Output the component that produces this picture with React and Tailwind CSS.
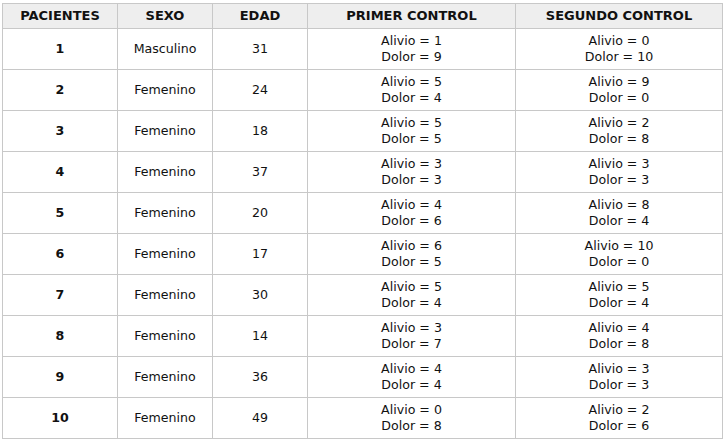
import React from "react";

const rows = [
  ["1", "Masculino", "31", [1, 9], [0, 10]],
  ["2", "Femenino", "24", [5, 4], [9, 0]],
  ["3", "Femenino", "18", [5, 5], [2, 8]],
  ["4", "Femenino", "37", [3, 3], [3, 3]],
  ["5", "Femenino", "20", [4, 6], [8, 4]],
  ["6", "Femenino", "17", [6, 5], [10, 0]],
  ["7", "Femenino", "30", [5, 4], [5, 4]],
  ["8", "Femenino", "14", [3, 7], [4, 8]],
  ["9", "Femenino", "36", [4, 4], [3, 3]],
  ["10", "Femenino", "49", [0, 8], [2, 6]],
];

const th = "border border-[#c8c8c8] bg-[#eeeeee] font-bold text-[13px] h-[25px] p-0 text-center align-middle";
const td = "border border-[#c8c8c8] text-[12.6px] h-[41px] p-0 text-center align-middle leading-[16px]";

export default function App() {
  return (
    <div className="w-[725px] h-[442px] bg-white pl-[2px] pt-[3px] text-[#111]" style={{ fontFamily: '"DejaVu Sans", Verdana, sans-serif' }}>
      <table className="border-collapse table-fixed w-[720px]">
        <colgroup>
          <col className="w-[115px]" />
          <col className="w-[95px]" />
          <col className="w-[95px]" />
          <col className="w-[208px]" />
          <col className="w-[207px]" />
        </colgroup>
        <thead>
          <tr>
            <th className={th}>PACIENTES</th>
            <th className={th}>SEXO</th>
            <th className={th}>EDAD</th>
            <th className={th}>PRIMER CONTROL</th>
            <th className={th}>SEGUNDO CONTROL</th>
          </tr>
        </thead>
        <tbody>
          {rows.map((r) => (
            <tr key={r[0]}>
              <td className={td + " font-bold"}>{r[0]}</td>
              <td className={td}>{r[1]}</td>
              <td className={td}>{r[2]}</td>
              <td className={td}>
                <div>Alivio = {r[3][0]}</div>
                <div>Dolor = {r[3][1]}</div>
              </td>
              <td className={td}>
                <div>Alivio = {r[4][0]}</div>
                <div>Dolor = {r[4][1]}</div>
              </td>
            </tr>
          ))}
        </tbody>
      </table>
    </div>
  );
}
